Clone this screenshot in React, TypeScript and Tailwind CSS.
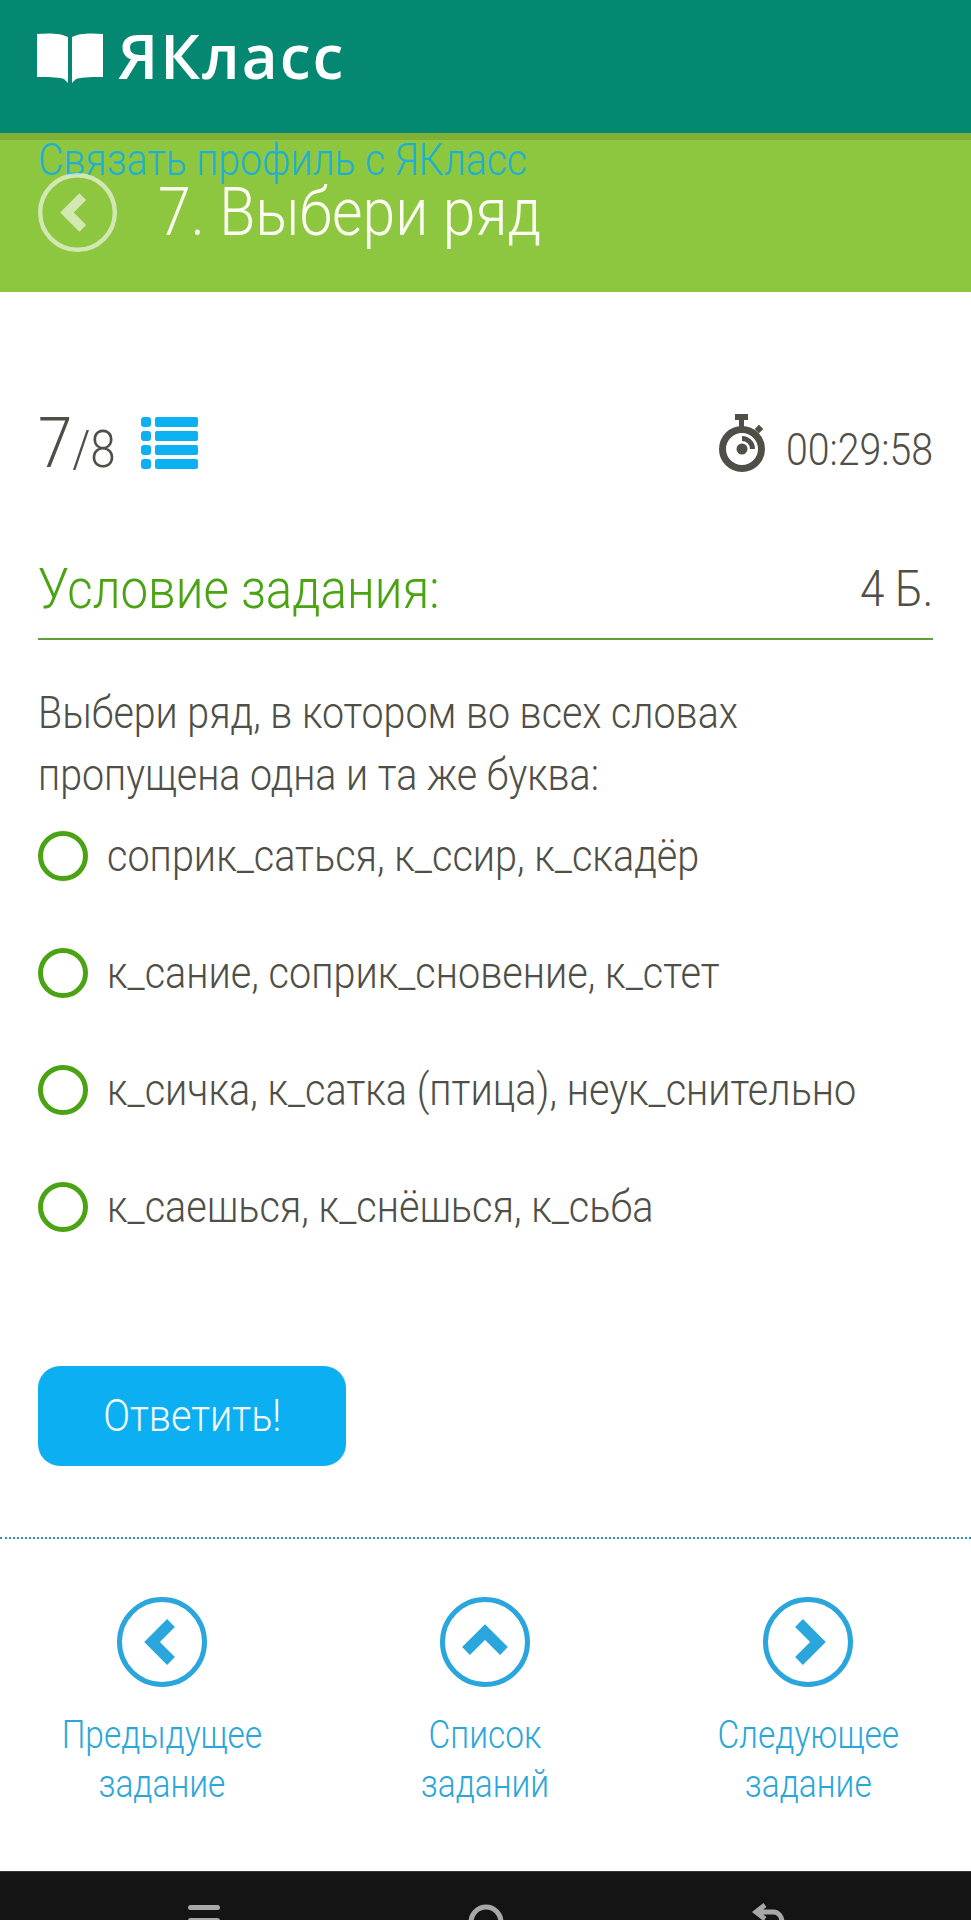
const font = { fontFamily: "Roboto, sans-serif" };

const options = [
  "соприк_саться, к_ссир, к_скадёр",
  "к_сание, соприк_сновение, к_стет",
  "к_сичка, к_сатка (птица), неук_снительно",
  "к_саешься, к_снёшься, к_сьба",
];

const Chevron = ({ d, color }: { d: string; color: string }) => (
  <svg viewBox="0 0 90 90" className="h-full w-full">
    <circle cx="45" cy="45" r="42.5" fill="none" stroke={color} strokeWidth="5" />
    <path d={d} fill="none" stroke={color} strokeWidth="11" strokeLinejoin="miter" />
  </svg>
);

const NavItem = ({ d, lines }: { d: string; lines: string[] }) => (
  <div className="flex w-[323px] flex-col items-center">
    <div className="h-[90px] w-[90px]">
      <Chevron d={d} color="#2ba6dc" />
    </div>
    <div className="mt-[24px] scale-x-[0.88] text-center text-[38px] leading-[49px] font-light text-[#2ba6d9]">
      {lines.map((l) => (
        <div key={l}>{l}</div>
      ))}
    </div>
  </div>
);

export default function App() {
  return (
    <div style={font} className="flex h-[1920px] w-[971px] flex-col overflow-hidden bg-white">
      {/* Top bar */}
      <header className="flex h-[133px] shrink-0 items-start bg-[#058872] pt-[33px] pl-[37px]">
        <svg viewBox="0 0 66 50" className="h-[50px] w-[66px]" fill="#fff">
          <path d="M0 1 C11 0 24 0 31 4 V50 L27 46 C20 44 9 44 0 44 Z" />
          <path d="M66 1 C55 0 42 0 35 4 V50 L39 46 C46 44 57 44 66 44 Z" />
        </svg>
        <span
          style={{ fontFamily: "'Open Sans', sans-serif" }}
          className="ml-[15px] text-[62px] leading-[44px] font-semibold tracking-[2px] text-white"
        >
          ЯКласс
        </span>
      </header>

      {/* Green title band */}
      <section className="relative h-[159px] shrink-0 border-t-[7px] border-[#80b135] bg-[#8dc63f]">
        <a className="absolute top-[-4px] left-[38px] origin-left scale-x-[0.88] text-[44.5px] leading-[48px] font-light whitespace-nowrap text-[#1fb0cf]">
          Связать профиль с ЯКласс
        </a>
        <div className="flex h-full items-center pb-[8px] pl-[38px]">
          <div className="h-[79px] w-[79px] opacity-60">
            <Chevron d="M51 27 L33 45 L51 63" color="#fff" />
          </div>
          <h1 className="ml-[41px] origin-left scale-x-[0.88] text-[67px] leading-none font-light whitespace-nowrap text-[#fbfdf2]">
            7. Выбери ряд
          </h1>
        </div>
      </section>

      <main className="flex flex-1 flex-col px-[38px] pt-[121px]">
        {/* Counter and timer */}
        <div className="flex h-[60px] items-center justify-between text-[#4f4f47]">
          <div className="flex items-center">
            <div className="w-[103px] origin-left scale-x-[0.88] whitespace-nowrap">
              <span className="text-[70px] leading-none font-light">7</span>
              <span className="text-[52px] leading-none font-light">/8</span>
            </div>
            <svg viewBox="0 0 57 54" className="h-[54px] w-[57px]" fill="#0db0f0">
              <rect x="0" y="1" width="10" height="10" rx="3" />
              <rect x="14" y="1" width="43" height="10" rx="2" />
              <rect x="0" y="15" width="10" height="10" rx="3" />
              <rect x="14" y="15" width="43" height="10" rx="2" />
              <rect x="0" y="29" width="10" height="10" rx="3" />
              <rect x="14" y="29" width="43" height="10" rx="2" />
              <rect x="0" y="43" width="10" height="10" rx="3" />
              <rect x="14" y="43" width="43" height="10" rx="2" />
            </svg>
          </div>
          <div className="flex items-center">
            <svg viewBox="0 0 48 58" className="h-[58px] w-[48px]">
              <rect x="17" y="0" width="13" height="6" fill="#4f4f47" />
              <rect x="21" y="5" width="5" height="8" fill="#4f4f47" />
              <rect x="38" y="12" width="6" height="6" fill="#4f4f47" transform="rotate(45 41 15)" />
              <circle cx="24" cy="35" r="19.5" fill="none" stroke="#4f4f47" strokeWidth="7" />
              <circle cx="24" cy="35" r="5.5" fill="#4f4f47" />
              <path d="M24 22 A13 13 0 0 1 37 35 H32 A8 8 0 0 0 24 27 Z" fill="#4f4f47" />
            </svg>
            <span className="mt-[14px] origin-right scale-x-[0.88] text-[44.6px] leading-none font-light whitespace-nowrap">
              00:29:58
            </span>
          </div>
        </div>

        {/* Task heading */}
        <div className="mt-[79px] flex h-[88px] items-center justify-between border-b-2 border-[#5f9f3c] pb-[12px]">
          <h2 className="origin-left scale-x-[0.88] text-[56px] leading-none font-light whitespace-nowrap text-[#4aa312]">
            Условие задания:
          </h2>
          <span className="origin-right scale-x-[0.88] text-[50px] leading-none font-light whitespace-nowrap text-[#4f4f47]">
            4 Б.
          </span>
        </div>

        <p className="mt-[42px] origin-left scale-x-[0.875] text-[45px] leading-[62px] font-light whitespace-nowrap text-[#4f4f47]">
          Выбери ряд, в котором во всех словах
          <br />
          пропущена одна и та же буква:
        </p>

        {/* Answer options */}
        <ul className="mt-[25px] flex flex-col gap-[67px]">
          {options.map((o) => (
            <li key={o} className="flex h-[50px] items-center">
              <span className="h-[50px] w-[50px] shrink-0 rounded-full border-[5px] border-[#4aa312]" />
              <span className="ml-[19px] origin-left scale-x-[0.88] pb-[2px] text-[45px] leading-none font-light whitespace-nowrap text-[#4f4f47]">
                {o}
              </span>
            </li>
          ))}
        </ul>

        <button className="mt-[134px] h-[100px] w-[308px] rounded-[22px] bg-[#0cb0f2] text-[#f4fbff]">
          <span className="inline-block scale-x-[0.88] text-[45px] font-light">Ответить!</span>
        </button>
      </main>

      {/* Prev / list / next */}
      <nav className="flex h-[334px] shrink-0 justify-center border-t-2 border-dotted border-[#2f8fb5] pt-[58px] pr-[1px]">
        <NavItem d="M54 26 L35 45 L54 64" lines={["Предыдущее", "задание"]} />
        <NavItem d="M26 54 L45 35 L64 54" lines={["Список", "заданий"]} />
        <NavItem d="M36 26 L55 45 L36 64" lines={["Следующее", "задание"]} />
      </nav>

      {/* Android soft keys, cut off by the screenshot */}
      <footer className="flex h-[49px] shrink-0 justify-between overflow-hidden border-t border-[#333] bg-[#141414] px-[184px] pt-[31px]">
        <svg viewBox="0 0 40 20" className="h-[20px] w-[40px]" fill="#a8a8a8">
          <rect x="4" y="2" width="32" height="5" rx="2.5" />
          <rect x="4" y="15" width="32" height="5" rx="2.5" />
        </svg>
        <svg viewBox="0 0 40 20" className="h-[20px] w-[40px]" fill="none" stroke="#a8a8a8" strokeWidth="5">
          <circle cx="20" cy="19" r="15" />
        </svg>
        <svg viewBox="0 0 40 20" className="h-[20px] w-[40px]" fill="none" stroke="#a8a8a8" strokeWidth="5">
          <path d="M18 2 L9 9 L18 16 M9 9 H26 C32 9 35 14 35 20" />
        </svg>
      </footer>
    </div>
  );
}
